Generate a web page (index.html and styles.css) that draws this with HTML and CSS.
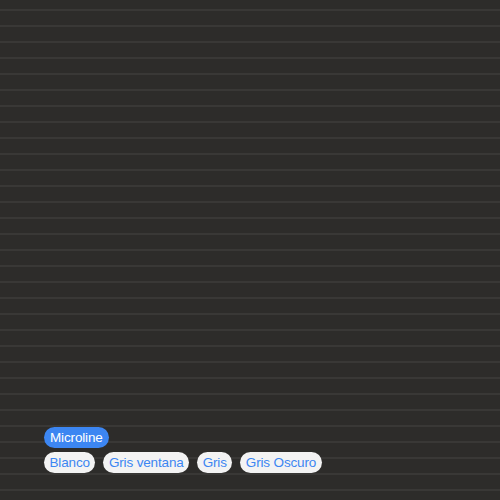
FILE: index.html
```html
<!DOCTYPE html>
<html>
<head>
<meta charset="utf-8">
<link rel="stylesheet" href="styles.css">
</head>
<body>
<div class="page">
  <div class="groups">
    <div class="row">
      <span class="chip chip-active">Microline</span>
    </div>
    <div class="row">
      <span class="chip">Blanco</span>
      <span class="chip">Gris ventana</span>
      <span class="chip">Gris</span>
      <span class="chip">Gris Oscuro</span>
    </div>
  </div>
</div>
</body>
</html>
```
FILE: styles.css
```css
html, body {
  margin: 0;
  padding: 0;
}
body {
  background-color: #2d2c2a;
  background-image: repeating-linear-gradient(
    to bottom,
    transparent 0px,
    transparent 9px,
    #393836 9px,
    #393836 11px,
    transparent 11px,
    transparent 16px
  );
  font-family: "Liberation Sans", Arial, sans-serif;
}
.page {
  min-height: 100vh;
  box-sizing: border-box;
  display: flex;
  flex-direction: column;
  justify-content: flex-end;
  padding: 0 0 27px 44px;
}
.groups {
  display: flex;
  flex-direction: column;
  gap: 4px;
}
.row {
  display: flex;
  gap: 8px;
}
.chip {
  display: inline-block;
  height: 21px;
  line-height: 21px;
  padding: 0 5.5px;
  border-radius: 11px;
  font-size: 13.5px;
  letter-spacing: -0.15px;
  background: #f3f3f3;
  color: #3c86f2;
}
.chip-active {
  background: #3c86f2;
  color: #ffffff;
  padding: 0 6px;
}
```
